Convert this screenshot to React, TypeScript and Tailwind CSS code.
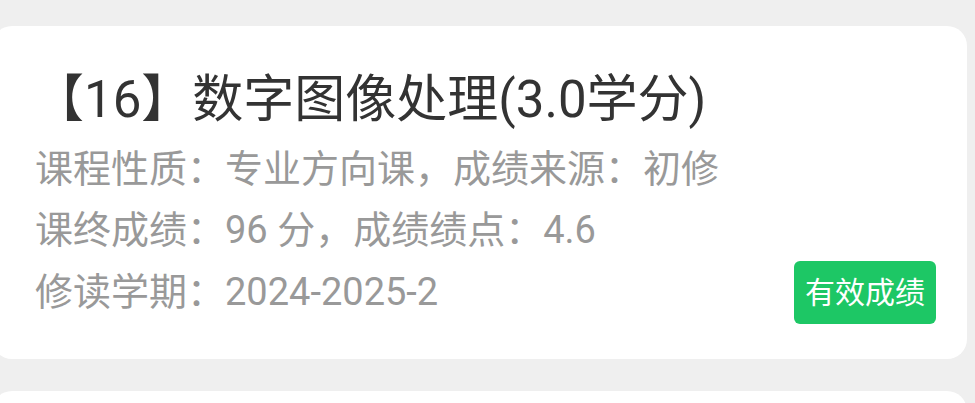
export default function App() {
  const font = { fontFamily: "Roboto, 'Noto Sans CJK SC', sans-serif" };
  return (
    <div className="h-[403px] w-[975px] overflow-hidden bg-[#efefef] pt-[26px]" style={font}>
      <div className="-ml-2 w-[975px] rounded-[20px] bg-white pl-[41px] pr-[31px] pt-[46px] pb-[35px]">
        <div className="text-[51px] leading-[56px] text-[#333333]">【16】数字图像处理(3.0学分)</div>
        <div className="mt-[11px] pl-[2px] text-[38px] leading-[61px] text-[#999999]">
          <div>课程性质：专业方向课，成绩来源：初修</div>
          <div>课终成绩：96 分，成绩绩点：4.6</div>
          <div className="flex items-center justify-between">
            <span>修读学期：2024-2025-2</span>
            <span className="rounded-[6px] bg-[#1dc765] px-[11px] text-[30px] leading-[63px] text-white">
              有效成绩
            </span>
          </div>
        </div>
      </div>
      <div className="-ml-2 mt-[32px] h-[100px] w-[975px] rounded-[20px] bg-white" />
    </div>
  );
}
